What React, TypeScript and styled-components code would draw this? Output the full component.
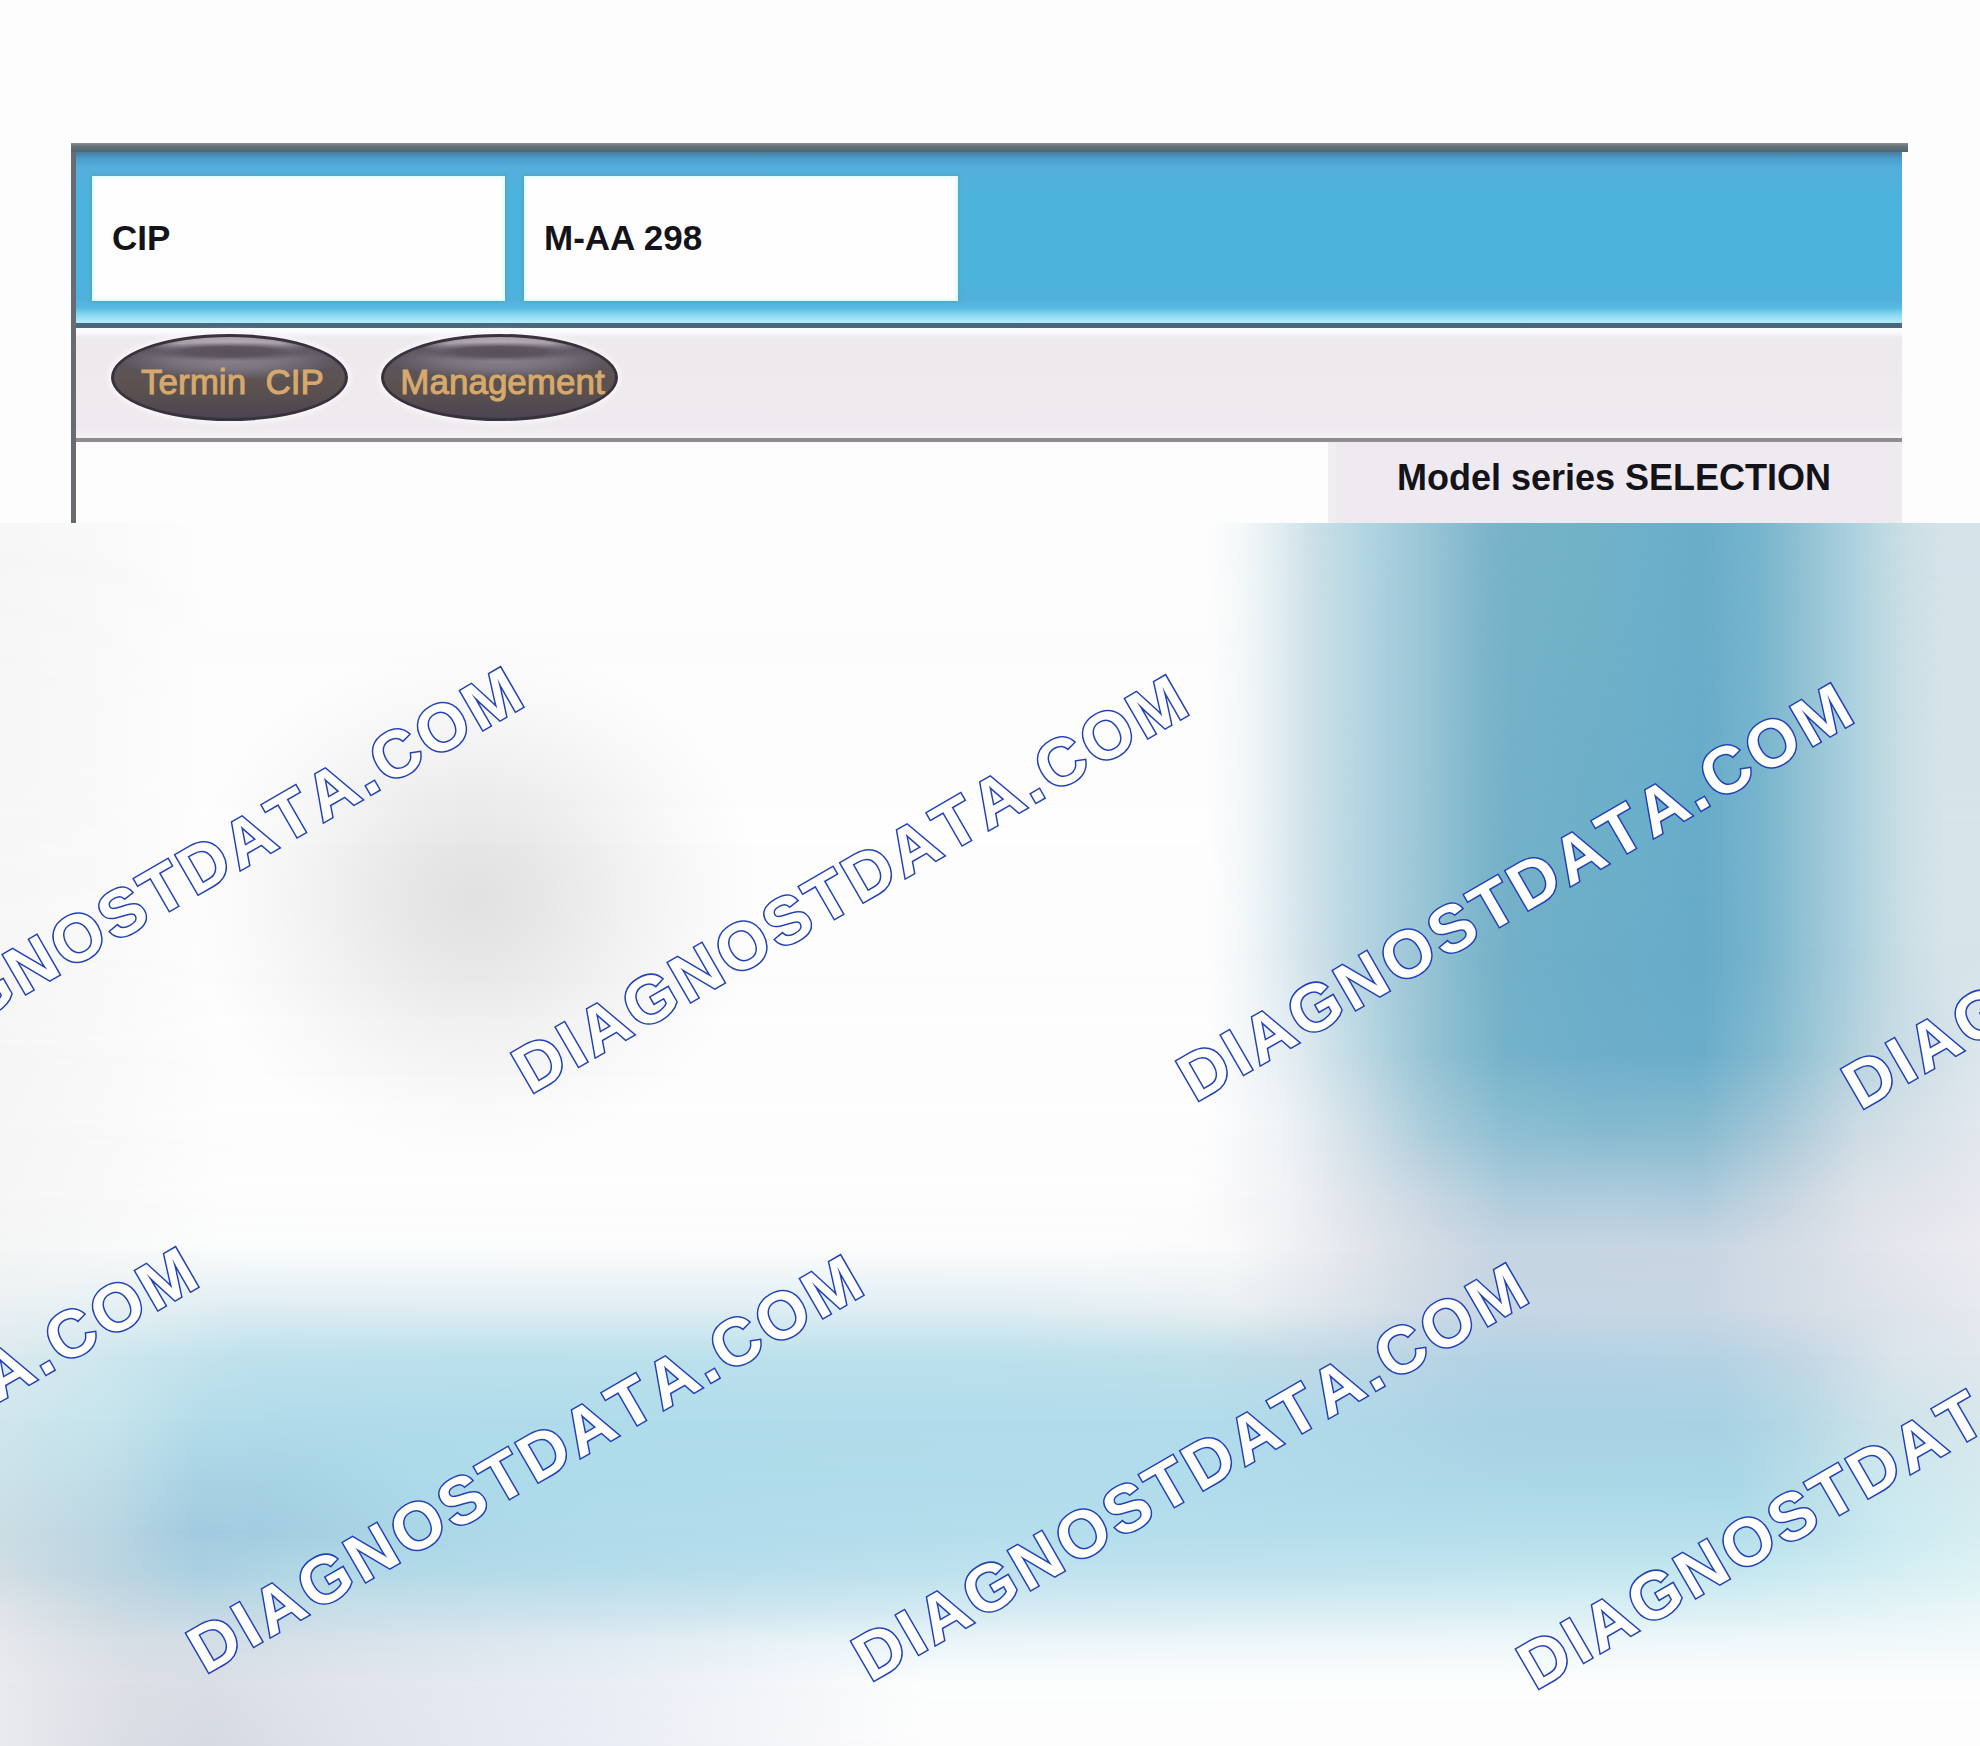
import React from "react";
import styled, { createGlobalStyle } from "styled-components";

const GlobalStyle = createGlobalStyle`
  *, *::before, *::after { box-sizing: border-box; }
  body {
    margin: 0;
    background: #fdfdfd;
    color: #15131a;
    font-family: "Liberation Sans", Arial, sans-serif;
  }
`;

const Page = styled.main`
  display: flex;
  flex-direction: column;
  min-height: 100vh;
  overflow: hidden;
`;

/* ---------- application window ---------- */

const Window = styled.section`
  padding: 143px 72px 0 71px;
`;

const TopRule = styled.div`
  height: 9px;
  background: linear-gradient(#8f9192, #66737b 3px, #4f6575);
`;

const WindowBody = styled.div`
  margin-right: 6px;
  border-left: 5px solid #686c72;
`;

const Header = styled.header`
  display: flex;
  gap: 19px;
  padding: 24px 16px 22px;
  border-bottom: 5px solid #47697b;
  background: linear-gradient(
    #4a7b9d 0,
    #4c9fcd 7px,
    #55aedb 16px,
    #4cb3dc 44px,
    #4cb3dc 130px,
    #50b0db 148px,
    #58bbe2 156px,
    #8cd8f2 163px,
    #b5ebfb 171px
  );
`;

const Field = styled.div<{ $width: number }>`
  display: flex;
  align-items: center;
  flex: 0 1 ${(p) => p.$width}px;
  height: 125px;
  padding: 0 20px 2px;
  background: #fefefe;
  box-shadow: inset 0 0 4px 1px #d2fbfd, 0 0 3px 1px #56a5bd;
  font-size: 35px;
  font-weight: bold;
  line-height: 40px;
`;

const Toolbar = styled.nav`
  display: flex;
  gap: 33px;
  height: 114px;
  padding: 6px 35px 0;
  border-bottom: 4px solid #908c92;
  background: linear-gradient(#fbfdff 0, #fbfbff 4px, #ede9ed 10px, #eeeaef 100px, #f6f3f7 110px);
`;

const OvalButton = styled.button`
  width: 237px;
  height: 87px;
  padding: 8px 0 0 6px;
  border: 3px solid #37323b;
  border-radius: 50%;
  background:
    radial-gradient(ellipse 40% 12% at 50% 18%, #55505a 0, #5a555f 50%, transparent 100%),
    radial-gradient(ellipse 36% 14% at 50% 9%, #b9aeb9 0, #a9a0ac 60%, transparent 100%),
    radial-gradient(ellipse 48% 26% at 50% 27%, #8b8490 0, #7a737f 50%, transparent 100%),
    linear-gradient(#4b4650 0, #59545e 30%, #5e5352 50%, #5a4f4f 70%, #4a4554 100%);
  box-shadow: 0 0 5px 3px #faf6fa;
  color: #d6a96c;
  font-family: inherit;
  font-size: 35px;
  line-height: 40px;
  white-space: pre;
  -webkit-text-stroke: 1px #d6a96c;
  cursor: pointer;
`;

const Workspace = styled.div`
  display: flex;
  justify-content: flex-end;
  height: 81px;
`;

const SelectionPanel = styled.aside`
  flex: 0 0 574px;
  padding: 16px 10px 0 0;
  border-left: 8px solid #f0eef0;
  background: #eeeaef;
`;

const PanelTitle = styled.h1`
  margin: 0;
  font-size: 36px;
  font-weight: bold;
  line-height: 40px;
  text-align: center;
`;

/* ---------- frosted preview ---------- */

const Preview = styled.section`
  position: relative;
  display: grid;
  flex: 1 0 1223px;
  overflow: hidden;
`;

/* Each band fades in from the previous band's line to its own line. */
const HazeBand = styled.div<{ $colors: string; $from: number; $to: number }>`
  grid-area: 1 / 1;
  background: linear-gradient(to right, ${(p) => p.$colors});
  ${(p) =>
    p.$to > 0 &&
    `mask-image: linear-gradient(to bottom, transparent ${p.$from}%, #000 ${p.$to}%);`}
`;

const Shade = styled.div`
  grid-area: 1 / 1;
  z-index: 1;
  background: radial-gradient(
    ellipse 290px 260px at 475px 375px,
    rgba(0, 0, 0, 0.11) 0,
    rgba(0, 0, 0, 0.088) 25%,
    rgba(0, 0, 0, 0.05) 50%,
    rgba(0, 0, 0, 0.018) 75%,
    transparent 100%
  );
`;

const Mark = styled.span<{ $x: number; $y: number }>`
  position: absolute;
  z-index: 2;
  left: ${(p) => p.$x}px;
  top: ${(p) => p.$y}px;
  transform: rotate(-30deg);
  transform-origin: 5px 58px;
  color: #fff;
  font-size: 66px;
  font-weight: bold;
  font-kerning: none;
  letter-spacing: 4px;
  line-height: 68px;
  white-space: nowrap;
  paint-order: stroke fill;
  -webkit-text-stroke: 3px #2141b4;
  pointer-events: none;
`;

const DESIGN_WIDTH = 1980;
const DESIGN_HEIGHT = 1223;

type Band = { y: number; stops: string };

/* stops: "colour offset" pairs on the 1980-wide design */
const BANDS: Band[] = [
  { y: 0, stops: "f7f7f7 0,f9f9f9 100,fdfdfd 210,fdfdfd 1205,f5f9fa 1240,e0edf2 1280,cbdfe6 1316,bcdae4 1345,aed2e0 1377,99c5d6 1430,80b6cc 1480,76b3c9 1510,72b2c6 1590,6eb1cb 1640,69aeca 1700,78b5ce 1760,92c2d3 1805,a8cfdf 1845,bcdae2 1880,cddfe6 1910,d6e4ea 1945,d6e4ea 1980" },
  { y: 427, stops: "f7f7f7 0,f9f9f9 100,fdfdfd 210,fdfdfd 1205,f5f8fa 1240,e0ecf2 1280,cddfe8 1316,bcd8e3 1345,aed0de 1377,96c3d4 1430,7cb5cb 1480,72b0c8 1510,6caec8 1590,6aadca 1640,66abc9 1700,78b4cd 1760,92c2d3 1805,a8cddd 1845,bcd8e1 1880,cddfe6 1910,d6e4ea 1945,d6e4ea 1980" },
  { y: 527, stops: "f6f6f6 0,f9f9f9 110,fdfdfd 225,fdfdfd 1205,f2f6f9 1250,dfeaf0 1300,bad7e2 1365,92c1d3 1435,74b2ca 1505,6eaeca 1590,6aadca 1700,84bad0 1770,a6cbd9 1830,c6dae3 1890,dbe6ec 1980" },
  { y: 607, stops: "f6f6f6 0,f9f9f9 110,fdfdfd 225,fdfdfd 1205,f0f4f7 1280,d2e0e8 1355,aaccda 1430,8dbfd3 1505,85bad0 1600,88bbd0 1700,a8c8d8 1780,cddce4 1860,e2e8ee 1980" },
  { y: 677, stops: "f6f6f6 0,f9f9f9 120,fdfdfd 230,fdfdfd 1190,f0f1f5 1290,dce3ea 1360,c8d7e2 1430,b0ccdc 1510,b0cddd 1620,adcbdc 1700,c6d5e0 1780,dde2e9 1860,e8e8ef 1980" },
  { y: 727, stops: "f4f5f5 0,f8f9f9 130,fbfcfc 230,fcfcfc 1100,f9f9fa 1230,e8eaef 1330,d2dbe4 1430,c6d5e2 1500,c8d6e2 1700,d6dde6 1800,e6e7ee 1900,ebebf0 1980" },
  { y: 787, stops: "eaf0f2 0,e2eff3 160,dcecf2 230,deedf3 500,deedf3 1000,e8eff2 1230,dfe6ec 1320,cfdbe5 1420,c6d6e3 1500,c8d6e3 1700,d5dde6 1800,e6e9ef 1980" },
  { y: 832, stops: "dceaef 0,cfe7ee 100,bfe1ec 250,bce1ec 500,bde1ec 1000,c0e0e9 1200,c2dae6 1300,b8d4e4 1440,b4d2e5 1500,b6d3e4 1720,c4d7e4 1800,dbe5ec 1900,e0e8ee 1980" },
  { y: 897, stops: "cfe6ed 0,c6e4ec 110,b4dce9 200,b0dbea 300,b0dcea 700,b2dceb 1200,aed6e7 1400,a9d2e5 1500,a8d2e4 1720,b4d7e5 1790,cde2e9 1880,d7e7ec 1980" },
  { y: 957, stops: "cce2e9 0,c0dde7 100,a8d3e4 200,a7d3e5 280,addaea 420,b0dcea 800,b1dceb 1200,abd7e7 1500,aad7e7 1740,b8dde8 1800,cbe7ee 1880,d4eaef 1980" },
  { y: 1007, stops: "cbdde4 0,bdd7e3 100,a4cbe0 190,a2cce0 260,aad6e6 400,b0dbeb 600,b4deec 1000,b3deeb 1740,c0e3ec 1820,cdebf1 1900,d6edf1 1980" },
  { y: 1047, stops: "d0dde4 0,b9d4e0 120,a9d0e2 200,b0d7e5 300,b4dceb 600,bfe2ee 1000,c0e3ee 1300,c4e7ef 1740,dcf2f5 1980" },
  { y: 1087, stops: "dfe4e9 0,c9d9e2 120,c0d8e3 200,c8dfe9 350,cde5ee 700,d5ebf3 1000,dbf0f5 1740,e9f6f8 1980" },
  { y: 1122, stops: "e6e8ec 0,d7dfe6 120,d4dee6 210,dae4ec 400,e2edf4 650,ebf5f9 820,edf6fa 1000,f2f9fa 1980" },
  { y: 1162, stops: "e9eaee 0,dddfe6 130,dadee6 210,e2e5ed 350,e8ecf4 560,f0f3f8 720,f8fafb 850,fcfdfd 920,fdfdfd 1980" },
  { y: 1223, stops: "e8eaee 0,dadde4 130,d5dae3 210,e0e3eb 350,e7ebf4 560,eff1f6 700,f9f9fb 850,fdfdfd 930,fdfdfd 1980" },
];

const toStops = (list: string) =>
  list
    .split(",")
    .map((pair) => {
      const [hex, x] = pair.split(" ");
      return `#${hex} ${((Number(x) / DESIGN_WIDTH) * 100).toFixed(2)}%`;
    })
    .join(", ");

const toPercent = (y: number) => Math.round((y / DESIGN_HEIGHT) * 10000) / 100;

/* Two staggered rows of the repeated mark. */
const MARK_STEP = { x: 665, y: 8 };
const MARK_ROWS = [
  { x: -135, y: 504 },
  { x: -460, y: 1084 },
];
const MARKS = MARK_ROWS.flatMap((row) =>
  [0, 1, 2, 3].map((i) => ({
    x: row.x + i * MARK_STEP.x,
    y: row.y + i * MARK_STEP.y,
  })),
);

export default function App() {
  return (
    <>
      <GlobalStyle />
      <Page>
        <Window>
          <TopRule />
          <WindowBody>
            <Header>
              <Field $width={413}>CIP</Field>
              <Field $width={434}>M-AA 298</Field>
            </Header>
            <Toolbar>
              <OvalButton type="button">{"Termin  CIP"}</OvalButton>
              <OvalButton type="button">Management</OvalButton>
            </Toolbar>
            <Workspace>
              <SelectionPanel>
                <PanelTitle>Model series SELECTION</PanelTitle>
              </SelectionPanel>
            </Workspace>
          </WindowBody>
        </Window>
        <Preview>
          {BANDS.map((band, i) => (
            <HazeBand
              key={band.y}
              $colors={toStops(band.stops)}
              $from={i ? toPercent(BANDS[i - 1].y) : 0}
              $to={toPercent(band.y)}
            />
          ))}
          <Shade />
          {MARKS.map((m) => (
            <Mark key={`${m.x}:${m.y}`} $x={m.x} $y={m.y}>
              DIAGNOSTDATA.COM
            </Mark>
          ))}
        </Preview>
      </Page>
    </>
  );
}
